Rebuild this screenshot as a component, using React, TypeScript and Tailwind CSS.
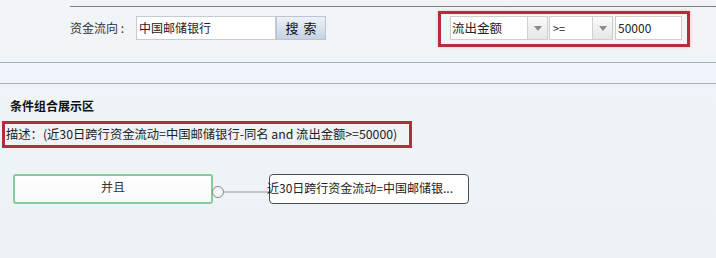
import React from "react";

const Arrow = () => (
  <div className="w-[20px] h-full bg-gradient-to-b from-[#fafafa] to-[#e6e6e6] border-l border-[#d0d0d0] flex items-center justify-center">
    <svg width="8" height="5" viewBox="0 0 8 5">
      <path d="M0 0 L8 0 L4 5 Z" fill="#8a8a8a" />
    </svg>
  </div>
);

export default function App() {
  return (
    <div
      className="w-[716px] h-[258px] overflow-hidden bg-gradient-to-b from-[#f1f5f8] to-[#edf2f6] text-[#222]"
      style={{ fontFamily: '"Noto Sans CJK SC", "Liberation Sans", sans-serif' }}
    >
      <div className="pt-[6px]">
        <div className="ml-[70px] h-px bg-[#7d7d7d]" />
      </div>
      <div className="flex items-start mt-[4px]">
        <div className="flex items-center mt-[5px] ml-[70px] h-[24px]">
          <div className="w-[66px] text-[12px] leading-none text-[#333]">资金流向 :</div>
          <div className="w-[140px] h-[24px] bg-white border border-[#c4cbd2] flex items-center pl-[2px] text-[12px]">
            中国邮储银行
          </div>
          <div className="w-[50px] h-[24px] bg-gradient-to-b from-[#eef2f7] to-[#c5d3e4] border border-[#b9c5d2] flex items-center justify-center text-[13px] tracking-[5px] pl-[5px] text-[#111]">
            搜索
          </div>
        </div>
        <div className="ml-[112px] w-[252px] h-[36px] border-[3px] border-[#b52d3a] shadow-[0_0_3px_#f3b6bd] pl-[9px] pt-[2px] flex items-start">
          <div className="flex h-[24px]">
            <div className="w-[98px] h-full bg-white border border-[#cfcfcf] flex">
              <div className="flex-1 flex items-center pl-[1px] text-[12.5px]">流出金额</div>
              <Arrow />
            </div>
            <div className="w-[64px] h-full bg-white border border-[#cfcfcf] flex ml-[1px]">
              <div className="flex-1 flex items-center pl-[3px] text-[11px]">&gt;=</div>
              <Arrow />
            </div>
            <div className="w-[67px] h-full bg-white border border-[#cfcfcf] flex items-center pl-[2px] text-[12px] ml-[2px]">
              50000
            </div>
          </div>
        </div>
      </div>
      <div className="mt-[15px] h-px bg-[#a9b2bb]" />
      <div className="h-[20px] bg-[#eef4f9]" />
      <div className="h-px bg-[#a9b2bb]" />
      <div className="pl-[10px] mt-[13px] text-[12px] font-bold leading-[18px] text-[#111]">条件组合展示区</div>
      <div className="ml-[2px] mt-[6px] w-[410px] h-[27px] border-[3px] border-[#b52d3a] flex items-center pl-[1px] text-[12.3px] text-[#222] whitespace-nowrap">
        描述：(近30日跨行资金流动=中国邮储银行-同名 and 流出金额&gt;=50000)
      </div>
      <div className="flex items-center mt-[26px] ml-[13px]">
        <div className="w-[200px] h-[30px] rounded-[3px] border-2 border-[#86cc9a] bg-gradient-to-b from-white to-[#f6fbf8] flex justify-center pt-[2px] text-[12px] text-[#333]">
          并且
        </div>
        <div className="flex items-center mt-[6px]">
          <div className="w-[12px] h-[12px] rounded-full border border-[#8a8a8a] bg-[#f4f6f8] -ml-[1px]" />
          <div className="w-[45px] h-[2px] bg-[#c2c6ca]" />
        </div>
        <div className="w-[200px] h-[30px] rounded-[4px] border border-[#4a4f55] bg-white flex pt-[4px] text-[12px] text-[#222] whitespace-nowrap overflow-visible">
          <span className="-ml-[3px]">近30日跨行资金流动=中国邮储银...</span>
        </div>
      </div>
    </div>
  );
}
